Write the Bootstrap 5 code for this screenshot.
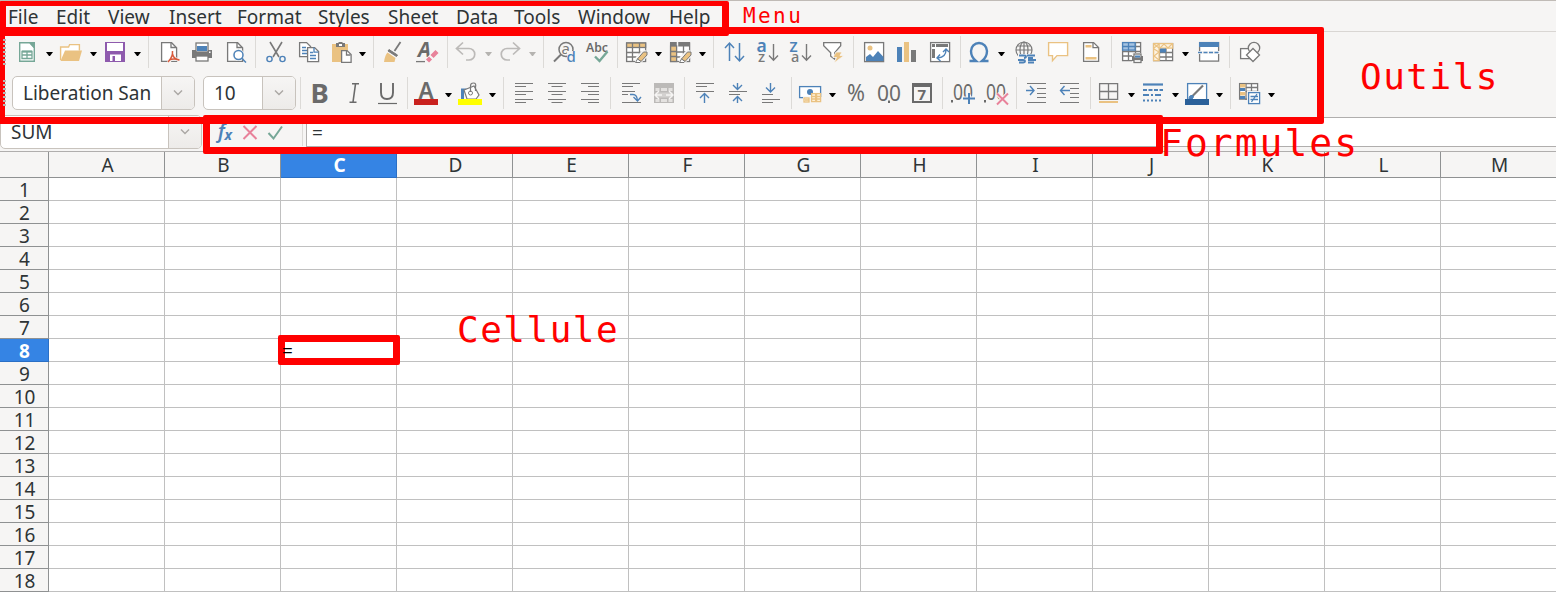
<!DOCTYPE html>
<html lang="en">
<head>
<meta charset="utf-8">
<title>Calc</title>
<link href="https://cdn.jsdelivr.net/npm/bootstrap@5.3.0/dist/css/bootstrap.min.css" rel="stylesheet">
<style>
body{font:19px/23px "Noto Sans",sans-serif;color:#2e3436;background:#f6f5f4;width:1556px;height:592px}
.menu-row{height:32px;border-top:1px solid #c0bbb6;border-bottom:1px solid #d9d6d3;display:grid;padding-left:8px;align-items:center;
 grid-template-columns:48px 52px 61px 68px 81px 70px 68px 58px 64px 91px 60px}
.menu-row a{color:inherit;text-decoration:none;line-height:28px;padding-top:2px}
.tool-row{height:40px;padding-left:12px}
.tool-row.second{height:45px;padding:1px 0 4px 12px}
.tbtn{width:33px;padding-left:5px;height:24px;flex:none;display:flex}
.tbtn.split{width:44px;padding-left:3px}
.tbtn svg{flex:none;display:block;overflow:visible}
.vsep{width:8px;height:32px;flex:none;background:linear-gradient(#dcdad7,#dcdad7) 4px 0/1px 100% no-repeat}
.grip{position:absolute;left:3px;width:3px;height:28px;z-index:2;background:repeating-linear-gradient(#b9b6b2 0 2px,transparent 2px 4px)}
.combo{height:34px;border:1px solid #c8c3bd;border-radius:5px;background:#fff;overflow:hidden;flex:none}
.combo .val{flex:1;padding-left:10px;line-height:32px;white-space:nowrap}
.combo .drop{width:33px;border-left:1px solid #c8c3bd;background:linear-gradient(#f6f5f4,#edebe9)}
.formula-row{height:34px}
.formula-row .combo{width:202px;margin-top:-2px}
.f-btns{width:104px;height:28px}
.f-input{height:30px;border:1px solid #b0aead;border-right:0;background:#fff;padding-left:5px;line-height:30px}
.sheet{table-layout:fixed;width:1557px;border-collapse:separate;border-spacing:0;border-top:1px solid #b0aead;background:#fff}
.sheet th,.sheet td{padding:0;border:solid #c0c0c0;border-width:0 1px 1px 0;height:23px;line-height:20px}
.sheet th{background:#f6f5f4;font-weight:400;text-align:center;border-color:#8f9192;padding:2px 0 0 1px}
.sheet thead th{height:26px;line-height:23px;padding-left:2px}
.sheet th.sel{background:#3584e4;color:#fff;font-weight:700;border-color:#2a6fc5}
.frame{position:absolute;border:7px solid red;border-radius:2px}
.note{position:absolute;color:red;font-family:"DejaVu Sans Mono",monospace;line-height:1;white-space:nowrap}
.cell-text{position:absolute;left:282px;top:340px;color:#000;z-index:2}
</style>
<script src="https://cdn.jsdelivr.net/npm/bootstrap@5.3.0/dist/js/bootstrap.bundle.min.js"></script>
</head>
<body class="position-relative overflow-hidden m-0">
<nav class="menu-row"><a href="#">File</a><a href="#">Edit</a><a href="#">View</a><a href="#">Insert</a><a href="#">Format</a><a href="#">Styles</a><a href="#">Sheet</a><a href="#">Data</a><a href="#">Tools</a><a href="#">Window</a><a href="#">Help</a></nav>
<div class="tool-row d-flex align-items-center" id="standard"></div>
<div class="tool-row second d-flex align-items-center" id="formatting">
  <div class="combo d-flex" style="width:183px"><span class="val">Liberation San</span><span class="drop d-flex align-items-center justify-content-center"><svg width="10" height="6"><path d="M1 .5l4 4 4-4" fill="none" stroke="#aaa7a4" stroke-width="1.4"/></svg></span></div>
  <div class="combo d-flex ms-2" style="width:93px"><span class="val">10</span><span class="drop d-flex align-items-center justify-content-center"><svg width="10" height="6"><path d="M1 .5l4 4 4-4" fill="none" stroke="#aaa7a4" stroke-width="1.4"/></svg></span></div>
</div>
<div class="formula-row d-flex">
  <div class="combo d-flex"><span class="val">SUM</span><span class="drop d-flex align-items-center justify-content-center"><svg width="10" height="6"><path d="M1 .5l4 4 4-4" fill="none" stroke="#aaa7a4" stroke-width="1.4"/></svg></span></div>
  <div class="f-btns">
    <svg width="104" height="30" fill="none" style="display:block"><text x="16" y="21" font-family="Noto Sans" font-size="19" font-weight="600" font-style="italic" fill="#4d82b8">f</text><text x="22.500" y="23" font-family="Noto Sans" font-size="14" font-weight="700" font-style="italic" fill="#4d82b8">x</text><path d="M41.500 9l13 13m0-13l-13 13" stroke="#e8829a" stroke-width="2"/><path d="M66.500 16l5 5.500 8.500-12" stroke="#76a797" stroke-width="2"/><path d="M100.500 5v24" stroke="#dcdad7"/></svg>
  </div>
  <div class="f-input flex-grow-1">=</div>
</div>
<table class="sheet" id="sheet"></table>

<i class="grip" style="top:39px"></i><i class="grip" style="top:80px"></i>
<div class="frame" style="left:-2px;top:27px;width:1326px;height:97px"></div>
<div class="frame" style="left:-1px;top:1px;width:730px;height:35px;border-top-width:5px"></div>
<div class="frame" style="left:203px;top:115px;width:960px;height:39px"></div>
<div class="frame" style="left:278px;top:335px;width:122px;height:30px"></div>
<span class="cell-text">=</span>
<span class="note" style="left:743px;top:6px;font-size:21px;letter-spacing:2.400px">Menu</span>
<span class="note" style="left:1360px;top:59px;font-size:36px;letter-spacing:1.500px">Outils</span>
<span class="note" style="left:1160px;top:124px;font-size:38px;letter-spacing:2px">Formules</span>
<span class="note" style="left:457px;top:312px;font-size:36px;letter-spacing:1.500px">Cellule</span>

<script>
const G='#797979',B='#4d82b8',O='#eac282',N='#76a797',P='#e8829a';
const p=(d,s=G,w=1.3,f='none')=>`<path d="${d}" stroke="${s}" stroke-width="${w}" fill="${f}"/>`;
const r=(x,y,w,h,f,s='none')=>`<rect x="${x}" y="${y}" width="${w}" height="${h}" fill="${f}" stroke="${s}" stroke-width="1.3"/>`;
const t=(x,y,size,c,txt,extra='')=>`<text x="${x}" y="${y}" font-size="${size}" fill="${c}" font-family="Noto Sans" ${extra}>${txt}</text>`;
const g=(x,y,s)=>`<g transform="translate(${x} ${y})">${s}</g>`;
const pencil=p('M12 23l1-5.500 7-7 4 4-7 7z','#f6f5f4',2.500,'#f6f5f4')+p('M13.500 19l6-7h3.500v3l-6 6.500z',G,1,O)+p('M11.500 22.500l2-3.500 3.500 2.500-1 1z',G,1,'#fff');
const icons={
 new:p('M4.700 2.700h10l4.600 5v13.600H4.700z',N,1.4,'#fff')+p('M14 2h6v7z','none',0,N)+p('M7 11.500h10v7H7zM7 15h10M12 11.500v7',N,1.3)+r(7,10.500,10,2,N),
 open:p('M1.600 20V7h8l1-2.400h9.800v6',O,1.4,'#fff')+p('M1.500 21L6 10.500h17L20 21z','none',0,O),
 save:r(2,2,20,20,'#8e5aad')+r(4,3,16,8,'#fff')+r(7,14.500,11,6.500,'#fff')+r(9.500,16,2.500,5,'#8e5aad'),
 pdf:p('M4.600 2.700h10l5 5V21.300H4.600z',G,1.3,'#fff')+p('M14 2.500v5h5')+p('M11 23q5-5 4.500-12M15.500 14q1 5 7 6M12 20q5-2 10 0','#f6f5f4',3)+p('M11 22q5-5 4.500-11M15.500 14q1 5 7 6M12 20q5-2 10 0','#d9593a',1.4),
 print:r(2,10,20,8,G)+r(6,3,12,9,'#fff',G)+r(7,6,10,5,B)+r(6,16,12,5,'#fff',G)+r(19,11.500,1.500,1.500,'#fff'),
 preview:p('M4.600 2.700h10l5 5V21.300H4.600z',G,1.3,'#fff')+p('M14 2.500v5h5')+'<circle cx="15.500" cy="15" r="6" fill="#f6f5f4"/>'+p('M18.500 18l4.500 4.500',B,1.5)+'<circle cx="15.500" cy="15" r="4.500" fill="#fff" stroke="#4d82b8" stroke-width="1.5"/>',
 cut:p('M6 2l9 15M18 2L9 17',G,1.6)+'<g fill="none" stroke="#4d82b8" stroke-width="1.4"><circle cx="5.500" cy="19" r="2.600"/><circle cx="18.500" cy="19" r="2.600"/></g>',
 copy:p('M2.600 2.600h7l4 4v10h-11z',G,1.3,'#fff')+p('M5 7.500h4M5 10.500h6M5 13.500h6',B)+p('M10.600 7.600h7l4 4v10h-11z',G,1.3,'#fff')+p('M17 7.600v4.500h4.500M13 12.500h3M13 15.500h6M13 18.500h6',B),
 paste:r(4,4,16,18,O)+r(8,3,9,4,G)+r(10.500,2,4,3,G)+r(11,4,3,2,'#fff')+p('M13.600 10.600h5.500l4 4v7.700h-9.500z',G,1.3,'#fff')+p('M18.500 11v4h4'),
 brush:p('M18.500 2l-6 9',G,1.8)+p('M7 9.500l8.500 5.500-1 1.500L6 11z',G,1,G)+p('M5.500 12.500l8 5.500-1 4H2q1-7 3.500-9.500z','none',0,O),
 clear:t(3,17,20.500,'#6a6a6a','A','font-weight="700" font-style="italic"')+p('M1 21.600h9',G,1.3)+p('M12 21.500l10-9.500','#f6f5f4',6)+p('M12.500 21l3-3M17 16.500l5-5',P,4.400),
 undo:p('M9 2.500L2.500 8.500 9 14.500M3 8.500h12a5.700 5.700 0 010 11.500h-3','#bcbab8',1.7),
 redo:p('M15 2.500l6.500 6L15 14.500M21 8.500H9A5.700 5.700 0 009 20h3','#bcbab8',1.7),
 find:'<circle cx="14" cy="9.500" r="7" fill="none" stroke="#797979" stroke-width="1.500"/>'+p('M9 14.500L2 21.500',G,2)+t(9.500,14,15,G,'a')+r(15,11,9,12,'#f6f5f4')+t(14.500,22,15,B,'d','font-weight="500"'),
 spell:t(1,12,13,'#6a6a6a','Abc','font-weight="600" textLength="22" lengthAdjust="spacingAndGlyphs"')+p('M10 16.500l4.500 4.500L22.500 11.500',N,2.400),
 rows:r(2.600,3,19,18.500,'#fff',G)+p('M2 12.500h20M2 17h20M8.500 3v19M15.500 3v19')+r(2.600,3,19,4.500,O,G)+p('M8.500 3v5M15.500 3v5')+pencil,
 cols:r(2.600,3,19,18.500,'#fff',G)+p('M2 12h20M2 17h20M15.500 3v19')+r(2,2,20,4.500,G)+p('M9.500 2v5','#f6f5f4',1.5)+r(2.600,6,6,15.500,O,G)+p('M3 11.500h6M3 16.500h6')+pencil,
 sort:p('M7.500 21V3M3 8l4.500-5L12 8M17.500 3v18M13 16l4.500 5 4.500-5',B,1.5),
 az:t(1.500,11.500,17.500,B,'a','font-weight="600"')+t(3,22,15,G,'z','font-weight="500"')+p('M18.500 4v16M14 15.500l4.500 4.700 4.500-4.700',G,1.4),
 za:t(1.500,11.500,14,B,'Z','font-weight="600"')+t(3,22,14.500,G,'a','font-weight="500"')+p('M18.500 4v16M14 15.500l4.500 4.700 4.500-4.700',G,1.4),
 filter:p('M2.700 2.700h17v3l-6 7v6.500l-4-3v-3.500l-7-7z',G,1.3,'#fff')+p('M15 12h6l-2 3.500h4L13 23l2.500-5.500H12z','#f6f5f4',.8,O),
 image:r(2.600,2.600,19,19,'#fff',G)+'<circle cx="8" cy="8" r="2.500" fill="#eac282"/>'+p('M4 21v-4l4-3 3 3 5-6 5.500 6v4z','none',0,B),
 chart:r(2,7,5,15,B)+r(9,2,5,20,O)+r(16,10,5,12,G),
 pivot:r(2.600,2.600,19,19,'#fff',G)+r(4,4,3,3,G)+r(8,4,12,3,G)+r(4,9,3,9,G)+p('M10 18q8-1 8-8M15 12l3-3 3 3M12 14.500L9 18l3.500 3',B,1.4),
 omega:p('M2.500 21h6.500q-5-4-5-10a8 8 0 0116 0q0 6-5 10h6.500',B,2.400),
 globe:'<g fill="none" stroke="#797979" stroke-width="1.200"><circle cx="11" cy="10" r="8"/><ellipse cx="11" cy="10" rx="4" ry="8"/><path d="M11 2v16M3 10h16M4.500 6h13"/></g>'+r(5,14,19,10,'#f6f5f4')+p('M6 15.500h5q2 0 2 1.200T11 18M14 15.500h8M15 20h8M5 20h5q2 0 2 1.200T10 22.500H6M15 22.500h6M15 18h5',B,1.8),
 comment:p('M2.600 2.600h19v13H11l-4.500 5v-5H2.600z',O,1.4,'#fff'),
 header:p('M4.600 2.600h10l5 5V21.300h-15z',G,1.3,'#fff')+p('M14 2.600v5h5')+r(6.500,5,6,2.500,O)+r(6.500,17,11,2.500,O),
 printarea:r(2.600,2.600,18,18,'#fff',G)+p('M2 11.500h19M2 16h19M8.500 3v18M15.500 3v18M3 6.500h18')+r(2.600,2.600,12.500,7.500,'#a6c3e2',B)+p('M3 6.500h12M8.500 3v7',B)+r(12,13,12,10,'#f6f5f4')+r(12,16,11,5,G)+r(14,14,7,4,'#fff',G)+r(15,15.500,5,2,B)+r(14,19.500,7,3,'#fff',G),
 freeze:r(2.600,3.600,19,17,'#fff',G)+p('M8 12.500h14M8 17h14M8.500 8v13M15 8v13')+r(2.600,3.600,19,4.500,'#fdf3e2',O)+r(2.600,3.600,5.500,17,'#fdf3e2',O)+r(9,8.500,6,4,B)+p('M3 4l5 4M8 4L3 8M9 8l4-4 4 4 4-4M3 9l5 3-5 4 5 4',O,1.1),
 split:r(2.600,2.600,19,18.500,'#fff',G)+r(2,2,20,5,B)+r(1,11,23,3,'#f6f5f4')+p('M1 12.500h22',B,1.3).replace('/>',' stroke-dasharray="4 1.500"/>'),
 shapes:r(2.600,8.600,11,10,'#fff',G)+'<circle cx="16" cy="8" r="5.700" fill="#f6f5f4" stroke="#797979" stroke-width="1.300"/>'+p('M15 8.500l6.500 6.500-6.500 6.500L8.500 15z',G,1.300,'#fff'),
 bold:t(1.500,22,27.500,'#6a6a6a','B','font-weight="700"'),
 italic:p('M10 2.700h7M7.500 21.300h7M13.500 3l-2.500 18','#6a6a6a',1.6),
 underline:p('M6 2v9.500q0 6.500 6 6.500t6-6.500V2','#6a6a6a',1.900)+p('M3 22.500h19','#6a6a6a',1.2),
 color:t(4.500,18,22.500,'#6a6a6a','A','font-weight="600"')+r(0,18,24,6,'#c9211e'),
 fill:p('M4.500 18V9h4',B,3)+p('M6 9l10-4 5 9-3 4H9z',G,1.2,'#fff')+p('M12.500 11V5q0-3 3-3t2 4v4',G,1.2)+'<circle cx="12.500" cy="12" r="2" fill="none" stroke="#797979"/>'+r(0,18,24,6,'#ff0'),
 left:g(1,0,p('M2 2.500h18M2 5.500h11M2 10.500h18M2 13.500h11M2 18.500h18M2 21.500h11',G,1.2)),
 center:g(1,0,p('M2 2.500h18M5.500 5.500h11M2 10.500h18M5.500 13.500h11M2 18.500h18M5.500 21.500h11',G,1.2)),
 right:g(1,0,p('M2 2.500h18M9 5.500h11M2 10.500h18M9 13.500h11M2 18.500h18M9 21.500h11',G,1.2)),
 wrap:p('M3 2.500h18M3 5.500h11M3 10.500h13M3 13.500h6M3 21.500h19',G,1.2)+p('M11 13.500h3q4 0 4.500 6M14.500 16l4 4 3.500-4',B,1.4),
 merge:r(2,2,20,20,'#bcbab8')+r(3.500,7,4,3,'#e4e2e0')+r(9,7,6,3,'#e4e2e0')+r(16.500,7,4,3,'#e4e2e0')+r(3.500,11.500,17,5,'#d3d1cf')+r(3.500,18,4,3,'#e4e2e0')+r(9,18,6,3,'#e4e2e0')+r(16.500,18,4,3,'#e4e2e0')+p('M7 10l-4 4 4 4M17 10l4 4-4 4M3 14h7M14 14h7','#f6f5f4',1.4),
 top:g(1,0,p('M2 2.500h18M2 5.500h11M2 10.500h18',G,1.2)+p('M10.500 22V13M6 17l4.500-4.500 4.500 4.500',B,1.4)),
 middle:g(1,0,p('M2 10.500h18M2 13.500h11',G,1.2)+p('M10.500 2v6M6 4l4.500 4.500 4.500-4.500M10.500 22v-6M6 20l4.500-4.500 4.500 4.500',B,1.4)),
 bottom:g(1,0,p('M2 13.500h11M2 18.500h18M2 21.500h11',G,1.2)+p('M10.500 2v9M6 6.500l4.500 4.500 4.500-4.500',B,1.4)),
 currency:r(1.600,5.600,21,11,'#fff',B)+'<circle cx="12" cy="11" r="3" fill="#4d82b8"/>'+r(5,16,19,6,'#f6f5f4')+r(13.600,12.600,4,8,'#fff3dd',O)+r(18.600,12.600,4,8,'#fff3dd',O)+r(6,17,5,4,'#fff3dd',O)+p('M14 15.500h9M14 18h9M7 19h4',O),
 percent:t(3,20,23,'#6a6a6a','%','textLength="18" lengthAdjust="spacingAndGlyphs"'),
 number:t(0,20,22,'#6a6a6a','00','textLength="24" lengthAdjust="spacingAndGlyphs"')+r(11,19.500,2,2.500,'#6a6a6a'),
 date:r(3,3,18,18,'none','#6a6a6a').replace('1.3','2')+r(3,3,18,3,'#6a6a6a')+t(7.500,18.500,15,'#6a6a6a','7','font-weight="700"'),
 add:t(2,19,22,'#6a6a6a','00','textLength="20" lengthAdjust="spacingAndGlyphs"')+r(0,19,2,2.500,'#6a6a6a')+p('M18 13.500v9.500M11 17.500h13','#f6f5f4',4)+p('M18 12v11M12 17.500h12',B,2),
 del:t(2,19,22,'#6a6a6a','00','textLength="20" lengthAdjust="spacingAndGlyphs"')+r(0,19,2,2.500,'#6a6a6a')+p('M13 12.500l11 11m0-11L13 23.500','#f6f5f4',4)+p('M13 12.500l11 11m0-11L13 23.500',P,2),
 indent:p('M2 2.500h19M12 7.500h9M12 12.500h9M12 16.500h9M2 21.500h19',G,1.2)+p('M1 9.500h7.500M5 5l4 4.500L5 14',B,1.4),
 outdent:p('M2 2.500h19M12 7.500h9M12 12.500h9M12 16.500h9M2 21.500h19',G,1.2)+p('M3 9.500h9M6.500 5l-4 4.500 4 4.500',B,1.4),
 border:p('M2.600 2.600h18v15.800h-18zM11.500 3v15M3 10.500h17',G,1.3)+r(2,20,19,2,O),
 lines:p('M2 3.500h20',B,2.200)+p('M2 9h20',B,2).replace('/>',' stroke-dasharray="4 1.500"/>')+p('M2 14h20',B,2).replace('/>',' stroke-dasharray="6 2 2 2"/>')+p('M2 19.500h20',B,2).replace('/>',' stroke-dasharray="2 2"/>'),
 linecolor:r(2.600,2.600,19,18,'#fff',B)+p('M18 4.500L7 15.500',G,2.200)+p('M4 18q0-4 3-3.500T7 18z',B,1,B)+r(0,18,24,6,'#2a6099'),
 cond:r(2.600,2.600,18,15.500,'#fff',G)+p('M9 3v16M14.500 3v7M9 6.500h12M9 10.500h12')+r(3,3,5.500,3.500,O)+r(3,7,5,3,B)+r(3,11,5.500,3.500,O)+r(3,15,5,3,B)+r(10,10,14,14,'#f6f5f4')+r(11.600,11.600,11,11,'#fff',B)+p('M13.500 15.500h7.500M13.500 18.500h7.500M14.500 21l5.500-8',B,1.3)
};
/* "*" marks a split button with a caret, "-" marks a disabled one, "|" is a separator */
const rowA='new* open* save* | pdf print preview | cut copy paste* | brush clear | undo*- redo*- | find spell | rows* cols* | sort az za filter | image chart pivot | omega* globe comment header | printarea freeze* split | shapes';
const rowB='| bold italic underline | color* fill* | left center right | wrap merge | top middle bottom | currency* percent number date | add del | indent outdent | border* lines* linecolor* | cond*';
function build(list){return list.split(' ').map(k=>{
 if(k==='|')return '<span class="vsep"></span>';
 const n=k.replace(/[*-]/g,''),s=k.includes('*'),c=k.includes('-')?'#b5b3b0':'#000';
 return `<span class="tbtn${s?' split':''}"><svg width="24" height="24">${icons[n]}</svg>${s?`<svg width="17" height="24"><path d="M7 12h7l-3 4h-1z" fill="${c}"/></svg>`:''}</span>`}).join('')}
document.getElementById('standard').innerHTML=build(rowA);
document.getElementById('formatting').insertAdjacentHTML('beforeend',build(rowB));
const L=[...'ABCDEFGHIJKLM'];
document.getElementById('sheet').innerHTML='<colgroup><col style="width:49px">'+L.map(()=>'<col style="width:116px">').join('')+'</colgroup><thead><tr><th></th>'+
 L.map(c=>`<th class="${c==='C'?'sel':''}">${c}</th>`).join('')+'</tr></thead><tbody>'+
 Array.from({length:18},(_,i)=>`<tr><th class="${i===7?'sel':''}">${i+1}</th>${'<td></td>'.repeat(13)}</tr>`).join('')+'</tbody>';
</script>
</body>
</html>
